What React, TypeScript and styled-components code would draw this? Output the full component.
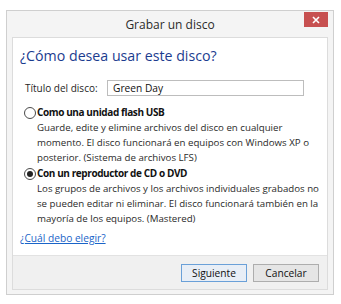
import React from "react";
import styled, { createGlobalStyle } from "styled-components";

const Global = createGlobalStyle`
  html, body { margin: 0; padding: 0; background: #ffffff; }
  body { font-family: "Open Sans", "Noto Sans", "Liberation Sans", sans-serif; }
`;

const Screen = styled.div`
  width: 339px;
  height: 302px;
  border-right: 2px solid #111;
  border-bottom: 2px solid #111;
  background: #fff;
  padding: 10px 0 0 6px;
  box-sizing: content-box;
  overflow: hidden;
`;

const Window = styled.div`
  width: 326px;
  height: 283px;
  border: 1px solid #cfcfcf;
  background: #f4f4f4;
  display: flex;
  flex-direction: column;
`;

const TitleBar = styled.div`
  height: 26px;
  flex: none;
  display: grid;
  grid-template-columns: 1fr auto 1fr;
  align-items: start;
`;

const Title = styled.div`
  grid-column: 2;
  padding-top: 5px;
  font-size: 12px;
  color: #2b2b2b;
`;

const Close = styled.div`
  grid-column: 3;
  justify-self: end;
  margin: 1px 5px 0 0;
  width: 24px;
  height: 15px;
  background: #c75050;
  display: flex;
  align-items: center;
  justify-content: center;
`;

const Panel = styled.div`
  margin: 0 5px 4px 5px;
  flex: 1;
  min-height: 0;
  border: 1px solid #dcdcdc;
  display: flex;
  flex-direction: column;
  background: #fff;
`;

const Content = styled.div`
  flex: 1;
  min-height: 0;
  padding: 10px 0 0 7px;
  display: flex;
  flex-direction: column;
`;

const Heading = styled.div`
  font-size: 14.2px;
  color: #1b3c8f;
  line-height: 16px;
`;

const FieldRow = styled.div`
  display: flex;
  align-items: center;
  margin: 16px 0 0 5px;
`;

const Label = styled.span`
  font-size: 10px;
  color: #1e1e1e;
  width: 82px;
`;

const TextBox = styled.div`
  width: 190px;
  height: 14px;
  border: 1px solid #bdbdbd;
  padding: 0 0 0 5px;
  font-size: 10.2px;
  line-height: 14px;
  color: #111;
`;

const Option = styled.div<{ $top: number }>`
  display: grid;
  grid-template-columns: 13px 1fr;
  margin: ${(p) => p.$top}px 0 0 4px;
`;

const Radio = styled.div<{ $checked?: boolean }>`
  width: 10px;
  height: 10px;
  border-radius: 50%;
  border: 1px solid #4b4b4b;
  background: #fff;
  margin-top: 2px;
  display: flex;
  align-items: center;
  justify-content: center;
  &::after {
    content: "";
    display: ${(p) => (p.$checked ? "block" : "none")};
    width: 6px;
    height: 6px;
    border-radius: 50%;
    background: #222;
  }
`;

const OptTitle = styled.div`
  font-size: 10px;
  font-weight: 700;
  letter-spacing: -0.4px;
  color: #111;
  line-height: 15px;
`;

const OptDesc = styled.div`
  grid-column: 2;
  font-size: 9.7px;
  color: #2a2a2a;
  line-height: 15px;
  white-space: nowrap;
`;

const Link = styled.a`
  margin: 5px 0 0 0;
  font-size: 10.2px;
  color: #1a64c8;
  text-decoration: underline;
  align-self: flex-start;
`;

const Footer = styled.div`
  height: 33px;
  flex: none;
  background: #f0f0f0;
  border-top: 1px solid #e2e2e2;
  display: flex;
  justify-content: flex-end;
  align-items: center;
  gap: 6px;
  padding-right: 8px;
`;

const Button = styled.div<{ $default?: boolean }>`
  width: 64px;
  height: 16px;
  border: 1px solid ${(p) => (p.$default ? "#6aa0d8" : "#adadad")};
  background: ${(p) => (p.$default ? "#e8eef6" : "#e5e5e5")};
  font-size: 10.2px;
  color: #111;
  display: flex;
  align-items: center;
  justify-content: center;
`;

export default function App() {
  return (
    <>
      <Global />
      <Screen>
        <Window>
          <TitleBar>
            <Title>Grabar un disco</Title>
            <Close>
              <svg width="8" height="8" viewBox="0 0 8 8">
                <path d="M1 1 L7 7 M7 1 L1 7" stroke="#fff" strokeWidth="1.6" />
              </svg>
            </Close>
          </TitleBar>
          <Panel>
            <Content>
              <Heading>¿Cómo desea usar este disco?</Heading>
              <FieldRow>
                <Label>Título del disco:</Label>
                <TextBox>Green Day</TextBox>
              </FieldRow>
              <Option $top={9}>
                <Radio />
                <OptTitle>Como una unidad flash USB</OptTitle>
                <OptDesc>
                  Guarde, edite y elimine archivos del disco en cualquier
                  <br />
                  momento. El disco funcionará en equipos con Windows XP o
                  <br />
                  posterior. (Sistema de archivos LFS)
                </OptDesc>
              </Option>
              <Option $top={1}>
                <Radio $checked />
                <OptTitle>Con un reproductor de CD o DVD</OptTitle>
                <OptDesc>
                  Los grupos de archivos y los archivos individuales grabados no
                  <br />
                  se pueden editar ni eliminar. El disco funcionará también en la
                  <br />
                  mayoría de los equipos. (Mastered)
                </OptDesc>
              </Option>
              <Link>¿Cuál debo elegir?</Link>
            </Content>
            <Footer>
              <Button $default>Siguiente</Button>
              <Button>Cancelar</Button>
            </Footer>
          </Panel>
        </Window>
      </Screen>
    </>
  );
}
